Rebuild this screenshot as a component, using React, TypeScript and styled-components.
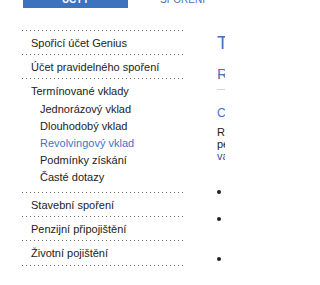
import React from "react";
import styled, { createGlobalStyle } from "styled-components";

const Global = createGlobalStyle`
  html, body { margin: 0; padding: 0; overflow: hidden; background: #fff; }
  body { font-family: "Liberation Sans", Arial, sans-serif; }
  * { box-sizing: border-box; }
`;

const Viewport = styled.div`
  width: 225px;
  height: 285px;
  overflow: hidden;
`;

const Page = styled.div`
  width: 760px;
  padding-left: 22px;
  display: flex;
  flex-direction: column;
`;

const TabBar = styled.div`
  display: flex;
  gap: 2px;
  margin-top: -22px;
  margin-left: 1px;
`;

const Tab = styled.div<{ $active?: boolean }>`
  width: 105px;
  height: 30px;
  display: flex;
  align-items: flex-end;
  justify-content: center;
  padding-bottom: 3px;
  font-size: 10px;
  line-height: 10px;
  text-transform: uppercase;
  background: ${(p) => (p.$active ? "#3d72be" : "transparent")};
  color: ${(p) => (p.$active ? "#fff" : "#3d72be")};
  font-weight: ${(p) => (p.$active ? "bold" : "normal")};
`;

const Columns = styled.div`
  display: flex;
  gap: 33px;
`;

const dots = `linear-gradient(to right, #666 1px, transparent 1px)`;

const NavList = styled.ul`
  list-style: none;
  margin: 22px 0 0;
  padding: 0 0 1px;
  width: 162px;
  flex: none;
  background-image: ${dots};
  background-size: 4px 1px;
  background-repeat: repeat-x;
  background-position: left bottom;
`;

const NavItem = styled.li`
  padding: 6px 0 4px 9px;
  font-size: 11px;
  line-height: 14px;
  color: #222;
  background-image: ${dots};
  background-size: 4px 1px;
  background-repeat: repeat-x;
  background-position: left top;
`;

const SubList = styled.ul`
  list-style: none;
  margin: 3px 0 0;
  padding: 0 0 2px 9px;
`;

const SubItem = styled.li<{ $current?: boolean }>`
  font-size: 11px;
  line-height: 17px;
  color: ${(p) => (p.$current ? "#3f74c9" : "#222")};
`;

const Content = styled.div`
  width: 480px;
  flex: none;
  padding-top: 24px;
  white-space: nowrap;
`;

const H1 = styled.h1`
  margin: 0;
  font-size: 18px;
  line-height: 22px;
  font-weight: normal;
  color: #3d72be;
`;

const H2 = styled.h2`
  margin: 11px 0 0;
  padding-bottom: 6px;
  border-bottom: 1px solid #d4d4d4;
  font-size: 15px;
  line-height: 18px;
  font-weight: normal;
  color: #3d72be;
`;

const H3 = styled.h3`
  margin: 16px 0 0;
  font-size: 12px;
  line-height: 14px;
  font-weight: normal;
  color: #3f74c9;
`;

const Para = styled.p`
  margin: 6px 0 0;
  font-size: 11px;
  line-height: 12px;
  color: #222;
`;

const Link = styled.span`
  color: #34509a;
`;

const Bullets = styled.ul`
  list-style: none;
  margin: 23px 0 0;
  padding: 0;
`;

const Bullet = styled.li`
  position: relative;
  padding-left: 12px;
  font-size: 11px;
  line-height: 13px;
  color: #222;
  margin-bottom: 1px;
  &::before {
    content: "";
    position: absolute;
    left: 0;
    top: 5px;
    width: 4px;
    height: 4px;
    border-radius: 50%;
    background: #222;
  }
`;

export default function App() {
  return (
    <>
      <Global />
      <Viewport>
        <Page>
          <TabBar>
            <Tab $active>Účty</Tab>
            <Tab>Spoření</Tab>
          </TabBar>
          <Columns>
            <NavList>
              <NavItem>Spořicí účet Genius</NavItem>
              <NavItem>Účet pravidelného spoření</NavItem>
              <NavItem>
                Termínované vklady
                <SubList>
                  <SubItem>Jednorázový vklad</SubItem>
                  <SubItem>Dlouhodobý vklad</SubItem>
                  <SubItem $current>Revolvingový vklad</SubItem>
                  <SubItem>Podmínky získání</SubItem>
                  <SubItem>Časté dotazy</SubItem>
                </SubList>
              </NavItem>
              <NavItem>Stavební spoření</NavItem>
              <NavItem>Penzijní připojištění</NavItem>
              <NavItem>Životní pojištění</NavItem>
            </NavList>
            <Content>
              <H1>Termínované vklady</H1>
              <H2>Revolvingový vklad</H2>
              <H3>Charakteristika produktu</H3>
              <Para>
                Revolvingový vklad je termínovaný vklad, který se po uplynutí doby automaticky obnovuje.
                <br />
                peníze tak máte uložené na pevně sjednanou dobu a po jejím skončení
                <br />
                <Link>vám vklad automaticky pokračuje</Link>
              </Para>
              <Bullets>
                <Bullet>
                  výhodné úročení podle zvolené doby trvání vkladu
                  <br />
                  úrok je připisován na konci každého období
                </Bullet>
                <Bullet>
                  možnost sjednat vklad na 7 dní až 5 let
                  <br />
                  s automatickým obnovením
                  <br />
                  bez poplatků za vedení
                </Bullet>
                <Bullet>vklad je pojištěn</Bullet>
              </Bullets>
            </Content>
          </Columns>
        </Page>
      </Viewport>
    </>
  );
}
